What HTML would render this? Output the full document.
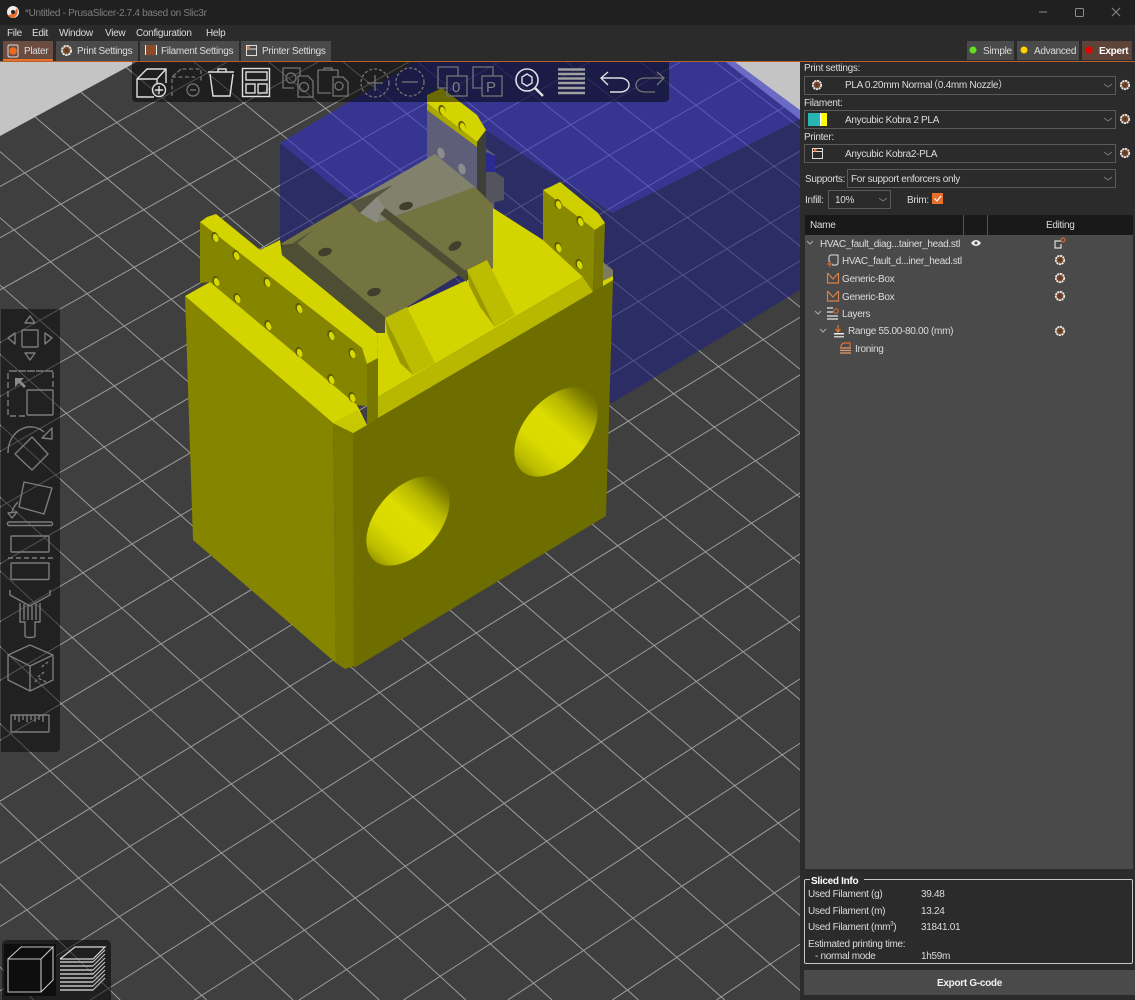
<!DOCTYPE html>
<html><head><meta charset="utf-8"><title>PrusaSlicer</title>
<style>
html,body{margin:0;padding:0;background:#2b2b2b;width:1135px;height:1000px;overflow:hidden}
#w{position:relative;width:1135px;height:1000px;overflow:hidden;font-family:"Liberation Sans","Noto Sans CJK SC",sans-serif;font-size:10px;letter-spacing:-.3px;color:#dcdcdc}
.b{position:absolute;box-sizing:border-box}
.t{position:absolute;white-space:nowrap;line-height:12px;height:12px}
svg{position:absolute;left:0;top:0}
sup{font-size:6px;line-height:0}
</style></head><body><div id="w">
<div class="b" style="left:0;top:0;width:1135px;height:25px;background:#202020"></div>
<div class="b" style="left:0;top:25px;width:1135px;height:37px;background:#2b2b2b"></div>
<div class="b" style="left:800px;top:62px;width:335px;height:938px;background:#2b2b2b"></div>
<div class="b" style="left:3px;top:41px;width:50px;height:20px;background:#6a4c40;border-bottom:2px solid #e8702a"></div>
<div class="b" style="left:56px;top:41px;width:82px;height:20px;background:#4a4a4a"></div>
<div class="b" style="left:140px;top:41px;width:99px;height:20px;background:#4a4a4a"></div>
<div class="b" style="left:241px;top:41px;width:90px;height:20px;background:#4a4a4a"></div>
<div class="b" style="left:967px;top:41px;width:47px;height:19px;background:#4a4a4a"></div>
<div class="b" style="left:1017px;top:41px;width:62px;height:19px;background:#4a4a4a"></div>
<div class="b" style="left:1082px;top:41px;width:50px;height:19px;background:#5e4339"></div>
<div class="b" style="left:0;top:61px;width:1135px;height:1px;background:#b5622f"></div>
<div class="b" style="left:804px;top:76px;width:312px;height:19px;border:1px solid #5a5a5a"></div>
<div class="b" style="left:804px;top:110px;width:312px;height:19px;border:1px solid #5a5a5a"></div>
<div class="b" style="left:804px;top:144px;width:312px;height:19px;border:1px solid #5a5a5a"></div>
<div class="b" style="left:847px;top:169px;width:269px;height:19px;border:1px solid #5a5a5a"></div>
<div class="b" style="left:828px;top:190px;width:63px;height:19px;border:1px solid #5a5a5a"></div>
<div class="b" style="left:805px;top:215px;width:328px;height:20px;background:#191919"></div>
<div class="b" style="left:805px;top:235px;width:328px;height:634px;background:#4a4a4a"></div>
<div class="b" style="left:963px;top:215px;width:1px;height:20px;background:#555"></div>
<div class="b" style="left:987px;top:215px;width:1px;height:20px;background:#555"></div>
<div class="b" style="left:804px;top:879px;width:329px;height:85px;border:1px solid #c8c8c8;border-radius:2px"></div>
<div class="b" style="left:810px;top:875px;width:54px;height:8px;background:#2b2b2b"></div>
<div class="b" style="left:804px;top:970px;width:331px;height:25px;background:#4a4a4a"></div>

<svg width="1135" height="1000" viewBox="0 0 1135 1000" fill="none">
<defs>
<clipPath id="vp"><rect x="0" y="62" width="800" height="938"/></clipPath>
<clipPath id="bed"><polygon points="483,-126 -400,353 -400,1000 1100,1000 1100,352"/></clipPath>
<linearGradient id="hg" gradientUnits="objectBoundingBox" x1="0" y1="0" x2="1" y2="0">
<stop offset="0" stop-color="#9a9a00"/><stop offset=".1" stop-color="#bcbc00"/><stop offset=".3" stop-color="#dada00"/><stop offset=".55" stop-color="#dcdc00"/><stop offset=".75" stop-color="#b8b800"/><stop offset=".92" stop-color="#808000"/><stop offset="1" stop-color="#6e6e00"/>
</linearGradient>
<symbol id="gear" viewBox="0 0 12 12" overflow="visible"><circle cx="6" cy="6" r="4.200" fill="#7a4a2c" stroke="#e8e8e8" stroke-width="1.800" stroke-dasharray="2.200 .6"/><circle cx="6" cy="6" r="1.600" fill="#5a3a28"/></symbol>
<symbol id="h" viewBox="0 0 10 14" overflow="visible"><ellipse cx="5" cy="7" rx="3.500" ry="5.200" transform="rotate(-18 5 7)" fill="#5e5e00"/><ellipse cx="5.700" cy="8" rx="2.600" ry="4.200" transform="rotate(-18 5.700 8)" fill="#d8d800"/></symbol>
</defs>

<g clip-path="url(#vp)">
<rect x="0" y="62" width="800" height="938" fill="#c4c4c4"/>
<polygon points="483,-126 -400,353 -400,1000 1100,1000 1100,352" fill="#3f3f3f"/>
<g clip-path="url(#bed)" stroke="#9c9c9c" stroke-width="1">
<path d="M-1485 1000L10800 -5730M-1379.500 1000L10800 -5730M-1274 1000L10800 -5730M-1169 1000L10800 -5730M-1064 1000L10800 -5730M-958.500 1000L10800 -5730M-853.500 1000L10800 -5730M-748.400 1000L10800 -5730M-643.400 1000L10800 -5730M-538.500 1000L10800 -5730M-433.500 1000L10800 -5730M-328.900 1000L10800 -5730M-224 1000L10800 -5730M-119.300 1000L10800 -5730M-14.700 1000L10800 -5730M90.100 1000L10800 -5730M194.400 1000L10800 -5730M299 1000L10800 -5730M403.500 1000L10800 -5730M507.800 1000L10800 -5730M612.300 1000L10800 -5730M716.400 1000L10800 -5730M820.700 1000L10800 -5730"/>
<path d="M-52.900 1000L-7165 -6030M33.700 1000L-7165 -6030M120.200 1000L-7165 -6030M206.500 1000L-7165 -6030M293.100 1000L-7165 -6030M379.300 1000L-7165 -6030M465.800 1000L-7165 -6030M552 1000L-7165 -6030M638.400 1000L-7165 -6030M724.700 1000L-7165 -6030M810.900 1000L-7165 -6030M897.100 1000L-7165 -6030M983.300 1000L-7165 -6030M1069.400 1000L-7165 -6030M1155.400 1000L-7165 -6030M1241.400 1000L-7165 -6030M1327.400 1000L-7165 -6030M1413.500 1000L-7165 -6030M1499.300 1000L-7165 -6030M1585.200 1000L-7165 -6030M1671 1000L-7165 -6030M1757 1000L-7165 -6030M1842.500 1000L-7165 -6030M1928.400 1000L-7165 -6030"/>
</g>
<!-- blue boxes -->
<polygon points="280,143 415,62 735,62 800,110 800,119 612,213 487,131 440,170 350,200" fill="rgba(48,48,200,.6)"/>
<polygon points="280,143 350,200 440,170 487,131 612,213 800,119 800,290 612,403 340,300 280,240" fill="rgba(33,33,128,.6)"/>

<!-- back plate -->
<polygon points="427,103 477,142 495,155 493,270 427,200" fill="#5e5e78"/>
<polygon points="427,95 442,88 477,115 486,130 477,142 427,103" fill="#d4d400"/>
<polygon points="427,103 477,142 477,147 427,110" fill="#a8a800"/>
<polygon points="477,142 486,130 486,205 477,200" fill="#3f3f3a"/>
<polygon points="486,152 495,156 495,172 486,172" fill="#2a2a90"/>
<polygon points="486,172 495,172 504,178 504,200 495,202 486,205" fill="#54545c"/>
<use href="#h" x="437" y="103" width="10" height="14"/>
<use href="#h" x="457" y="119" width="10" height="14"/>
<ellipse cx="441" cy="153" rx="3.500" ry="5.500" fill="#8c8c88" transform="rotate(-18 441 153)"/>
<ellipse cx="462" cy="169" rx="3.500" ry="5.500" fill="#8c8c88" transform="rotate(-18 462 169)"/>

<!-- right plate -->
<polygon points="543,190 595,230 593,292 583,277 543,240" fill="#8a8a00"/>
<polygon points="543,190 550,187 560,182 598,213 605,223 595,230" fill="#cfcf00"/>
<polygon points="595,230 605,223 603,286 593,292" fill="#777700"/>
<polygon points="603,262 613,270 613,283 603,287" fill="#7c7c60"/>
<polygon points="603,281 613,276 613,283 603,287" fill="#d4d400"/>
<use href="#h" x="553" y="197" width="10" height="14"/>
<use href="#h" x="575" y="214" width="10" height="14"/>
<use href="#h" x="553" y="240" width="10" height="14"/>
<use href="#h" x="574" y="257" width="10" height="14"/>

<!-- body faces -->
<polygon points="353,433 367,425 367,364 378,358 378,418 593,292 603,286 613,280 606,516 354,668" fill="#6e6e00"/>
<polygon points="185,296 333,423 336,663 193,540" fill="#858500"/>
<polygon points="333,423 353,433 354,666 345,669 336,663" fill="#7a7a00"/>
<!-- floor -->
<polygon points="378,358 377,333 385,318 493,268 493,208 543,240 583,277 378,397" fill="#d4d400"/>
<polygon points="378,397 583,277 593,292 378,418" fill="#b8b800"/>
<!-- plate -->
<polygon points="200,222 362,348 367,363 367,406 357,405 210,282 200,283" fill="#858500"/>
<polygon points="185,296 210,282 357,405 367,425 353,433 333,423" fill="#d4d400"/>
<polygon points="333,423 357,410 367,425 353,433" fill="#c8c800"/>
<polygon points="200,222 207,217 216,214 260,250 280,240 282,255 377,333 378,358 367,364 362,348" fill="#d4d400"/>
<polygon points="367,364 378,358 378,418 367,425" fill="#787800"/>
<g>
<use href="#h" x="210" y="230" width="10" height="14"/>
<use href="#h" x="231" y="248" width="10" height="14"/>
<use href="#h" x="211" y="274" width="10" height="14"/>
<use href="#h" x="232" y="291" width="10" height="14"/>
<use href="#h" x="262" y="275" width="10" height="14"/>
<use href="#h" x="263" y="318" width="10" height="14"/>
<use href="#h" x="294" y="301" width="10" height="14"/>
<use href="#h" x="294" y="345" width="10" height="14"/>
<use href="#h" x="326" y="328" width="10" height="14"/>
<use href="#h" x="326" y="372" width="10" height="14"/>
<use href="#h" x="347" y="346" width="10" height="14"/>
<use href="#h" x="347" y="390" width="10" height="14"/>
</g>
<!-- translucent -->
<polygon points="282,243 350,203 377,223 475,187 493,205 493,268 467,270 407,307 387,318 377,333 282,255" fill="#747440"/>
<polygon points="350,203 435,154 475,187 377,223" fill="#82826c"/>
<polygon points="282,245 297,243 385,317 385,333 377,333 282,255" fill="#4e4e34"/>
<polygon points="293,243 313,230 298,243" fill="#55553f"/>
<polygon points="385,208 467,272 467,282 380,214" fill="#4e4e34"/>
<polygon points="350,203 393,185 377,197 360,213" fill="#55553f"/>
<polygon points="360,213 377,197 385,208 380,214 377,223" fill="#8a8a80"/>
<g fill="#3f3f2c">
<ellipse cx="325" cy="252" rx="7" ry="4" transform="rotate(-15 325 252)"/>
<ellipse cx="374" cy="292" rx="7" ry="4" transform="rotate(-15 374 292)"/>
<ellipse cx="406" cy="206" rx="7" ry="4" transform="rotate(-15 406 206)"/>
<ellipse cx="455" cy="246" rx="7" ry="4" transform="rotate(-30 455 246)"/>
</g>
<!-- ribs -->
<polygon points="385,318 407,307 435,363 413,375 400,363" fill="#bcbc00"/>
<polygon points="385,318 387,333 400,363 413,375 396,340" fill="#9a9a00"/>
<polygon points="467,270 487,260 515,315 495,327 480,307" fill="#bcbc00"/>
<polygon points="467,270 469,285 480,307 495,327 478,292" fill="#9a9a00"/>
<!-- holes -->
<ellipse cx="408" cy="521" rx="52" ry="32" transform="rotate(-49.400 408 521)" fill="url(#hg)"/>
<ellipse cx="556" cy="432" rx="52" ry="32" transform="rotate(-49.400 556 432)" fill="url(#hg)"/>

<!-- top toolbar -->
<path d="M132 62H669V98a4 4 0 0 1-4 4H136a4 4 0 0 1-4-4Z" fill="rgba(0,0,0,.5)"/>
<!-- left toolbar -->
<path d="M1 309H60V748a4 4 0 0 1-4 4H1Z" fill="rgba(0,0,0,.47)"/>
<!-- bottom left -->
<path d="M2 1000V945a5 5 0 0 1 5-5H106a5 5 0 0 1 5 5V1000Z" fill="rgba(0,0,0,.5)"/>
<rect x="4" y="944" width="52" height="52" fill="#0e0e0e"/>
</g>

<!-- top icons -->
<g stroke="#e0e0e0" stroke-width="1.400" fill="none">
<path d="M154 97H137V79L147 69H166V83M137 79H157V84M157 79L166 69"/>
<circle cx="159" cy="90" r="6.500"/><path d="M155 90H163M159 86V94"/>
<path d="M208 72H234M218 72V69H226V72M210 74L213 96H230L233 74"/>
<rect x="242.500" y="68.500" width="27" height="28"/><rect x="246" y="72" width="21" height="8"/><rect x="246" y="84" width="9" height="9"/><rect x="258" y="84" width="9" height="9"/>
<circle cx="527" cy="80" r="11" stroke-width="1.600"/><path d="M527 74L532 77V83L527 86L522 83V77Z"/><path d="M535 88L543 96" stroke-width="2.400"/>
<path d="M608 72L601 78L608 85M601 78H620C632 78 632 92 620 92H610"/>
</g>
<g stroke="#747474" stroke-width="1.300" fill="none">
<path d="M172 96V77L181 69H201V82M172 77H195M181 69L172 77" stroke-dasharray="4 2.500"/>
<circle cx="193" cy="90" r="6"/><path d="M190 90H196"/>
<path d="M294 88H283V68H300V76"/><circle cx="291" cy="78" r="5"/><path d="M298 76H308L313 81V97H298Z"/><circle cx="304" cy="87" r="4.500"/>
<path d="M331 93H318V70H338V77M324 70V68H332V71"/><path d="M333 77H343L348 82V96H333Z"/><circle cx="339" cy="86" r="4"/>
<circle cx="375" cy="83" r="14" stroke-dasharray="3 2"/><path d="M367 83H383M375 75V91"/>
<circle cx="410" cy="82" r="14" stroke-dasharray="3 2"/><path d="M402 82H418"/>
<path d="M447 88H438V67H458V76"/><rect x="447" y="76" width="20" height="20"/>
<path d="M482 88H473V67H493V76"/><rect x="482" y="76" width="20" height="20"/>
<path d="M657 72L664 78L657 85M664 78H645C633 78 633 92 645 92H655"/>
</g>
<g stroke="#a0a0a0" stroke-width="2.600"><path d="M558 69.500H585M558 74H585M558 78.500H585M558 83H585M558 88H585M558 93H585"/></g>
<text x="452" y="92" font-family="Liberation Sans, sans-serif" font-size="15" fill="#808080" stroke="none">0</text>
<text x="486" y="92" font-family="Liberation Sans, sans-serif" font-size="15" fill="#808080" stroke="none">P</text>

<!-- left icons -->
<g stroke="#7c7c7c" stroke-width="1.400" fill="none" stroke-linejoin="round">
<rect x="22" y="330" width="16" height="17" rx="1"/>
<path d="M30 316L25 323H35ZM30 360L25 353H35ZM8 338L15 333V344ZM52 338L45 333V344Z"/>
<path d="M25 416H8V371H53V390M53 371H8" stroke-dasharray="6 3"/><rect x="27" y="390" width="26" height="25" rx="1"/>
<path d="M15 378H24L21 381L26 386L24 388L19 383L15 387Z" fill="#8a8a8a" stroke="none"/>
<path d="M8 453C8 430 30 420 44 432"/><path d="M42 438L52 428L52 439Z"/><path d="M32 437L48 454L32 470L15 454Z"/>
<path d="M24 482L52 488L44 514L19 507Z"/><path d="M18 502C15 505 13 508 12 512"/><path d="M8 513L17 512L12 518Z"/>
<rect x="7.500" y="522" width="45" height="3.500" rx="1.500"/>
<rect x="11" y="536" width="38" height="16" rx="1"/><path d="M8 558H53" stroke-dasharray="5 3"/><rect x="11" y="563" width="38" height="16.500" rx="1"/>
<path d="M10 590V595L30 606L50 595V590"/><path d="M20 603V622H25V636C25 638 35 638 35 636V622H40V603M24 604V620M28 606V620M32 606V620M36 604V620"/>
<path d="M8 655L30 645L53 655V680L30 691L8 680ZM8 655L30 666L53 655M30 666V691"/><path d="M48 662L40 668M44 672L38 677M35 682L38 678M46 682L38 678" stroke-dasharray="3 2"/>
<rect x="11" y="715" width="38" height="17" rx="1"/><path d="M15 715V720M19 715V722M23 715V720M27 715V722M31 715V720M35 715V722M39 715V720M43 715V722"/>
</g>

<!-- bottom left icons -->
<g stroke="#c4c4c4" stroke-width="1.100" fill="none"><path d="M8 959H41V992H8ZM8 959L21 947H53L41 959M53 947V980L41 992"/></g>
<g stroke="#d8d8d8" stroke-width="1.200" fill="none"><path d="M60 959L75 947H105L93 959H60"/></g>
<g stroke="#c0c0c0" stroke-width="1.600" fill="none"><path d="M60 962H93M60 966H93M60 970H93M60 974H93M60 978H93M60 982H93M60 986H93M60 990H93"/><path d="M93 962L105 950M93 966L105 954M93 970L105 958M93 974L105 962M93 978L105 966M93 982L105 970M93 986L105 974M93 990L105 978" stroke-width="1.200"/></g>

<!-- title logo -->
<circle cx="13" cy="12" r="6" fill="#eee"/><path d="M8 15C11 15 15 12 17 8C19 12 17 17 13 18C11 18 9 17 8 15Z" fill="#e8702a"/><circle cx="13" cy="12" r="2" fill="#222"/>
<!-- window buttons -->
<path d="M1039 12H1047" stroke="#8a8a8a"/><rect x="1075.500" y="8.500" width="8" height="8" rx="1" stroke="#8a8a8a"/><path d="M1112 8L1120 16M1120 8L1112 16" stroke="#8a8a8a"/>

<!-- tab icons -->
<rect x="8" y="45" width="10" height="12" rx="1.500" stroke="#ddd" fill="none"/><circle cx="13" cy="51" r="3.800" fill="#ec6a20"/>
<use href="#gear" x="60" y="44" width="13" height="13"/>
<rect x="145" y="45" width="11" height="10" fill="#8c4a26"/><path d="M145.500 45V55M156.500 45V55" stroke="#eee"/>
<rect x="246.500" y="45.500" width="10" height="10" stroke="#ddd" fill="none"/><path d="M247 49H256" stroke="#ddd"/><rect x="247" y="46" width="3" height="3" fill="#ec6a20"/>

<!-- mode dots -->
<circle cx="973" cy="50" r="3.500" fill="#60e020"/><circle cx="1024" cy="50" r="3.500" fill="#ffd000"/><circle cx="1089" cy="50" r="3.500" fill="#e80000"/>

<!-- combos icons -->
<use href="#gear" x="811" y="79" width="12" height="12"/>
<rect x="808" y="113" width="12" height="13" fill="#2ab5b5"/><rect x="820" y="113" width="7" height="13" fill="#ffff00"/><rect x="820" y="113" width="1" height="13" fill="#fff"/>
<rect x="812.500" y="148.500" width="10" height="10" stroke="#ddd" fill="none"/><path d="M813 151.500H822" stroke="#ddd"/><rect x="814" y="149" width="2.500" height="2.500" fill="#ec6a20"/>
<use href="#gear" x="1119" y="79" width="12" height="12"/><use href="#gear" x="1119" y="113" width="12" height="12"/><use href="#gear" x="1119" y="147" width="12" height="12"/>
<path d="M1104 84L1108 87L1112 84M1104 118L1108 121L1112 118M1104 152L1108 155L1112 152M1104 177L1108 180L1112 177M879 198L883 201L887 198" stroke="#777" fill="none"/>
<rect x="932" y="193" width="11" height="11" fill="#e8702a"/><path d="M934.500 198.500L937 201L941 196" stroke="#fff" stroke-width="1.200" fill="none"/>

<!-- tree icons -->
<path d="M807 241L810 244L813 241M815 311L818 314L821 311M820 329L823 332L826 329" stroke="#aaa" fill="none"/>
<path d="M971 243C974 239 978 239 981 243C978 247 974 247 971 243Z" fill="#eee"/><circle cx="976" cy="243" r="1.500" fill="#4a4a4a"/>
<path d="M1061 241H1055V248H1061V244" stroke="#ddd" fill="none" stroke-width="1.200"/><circle cx="1063" cy="240" r="2" stroke="#e8702a" fill="none"/>
<path d="M829 262V257C829 256 830 255 831 255H838V263C838 264 837 265 836 265H832" stroke="#ddd" fill="none"/><path d="M827 264H833M830 261V267" stroke="#e8702a"/>
<path d="M827.500 273V283H838.500V273M827.500 273L833 279L838.500 273" stroke="#d9804a" fill="none" stroke-width="1.200"/>
<path d="M827.500 291V301H838.500V291M827.500 291L833 297L838.500 291" stroke="#d9804a" fill="none" stroke-width="1.200"/>
<path d="M827 308H833M827 312H833M827 316H838M827 319H838" stroke="#e8e8e8" stroke-width="1.200"/><circle cx="836" cy="311" r="2.200" stroke="#e8702a" fill="none"/>
<path d="M838 325V331M835.500 329L838 332L840.500 329" stroke="#e8702a" stroke-width="1.300" fill="none"/><rect x="834" y="333" width="10" height="1.500" fill="#eee"/><rect x="834" y="336" width="10" height="1.500" fill="#ccc"/>
<path d="M841 347C841 344 843 343 845 343H850V347" stroke="#e8702a" fill="none" stroke-width="1.200"/><path d="M840 348H851M840 350.500H851M840 353H851" stroke="#e89a6a" stroke-width="1.300"/>
<use href="#gear" x="1054" y="254" width="12" height="12"/><use href="#gear" x="1054" y="272" width="12" height="12"/><use href="#gear" x="1054" y="290" width="12" height="12"/><use href="#gear" x="1054" y="325" width="12" height="12"/>
</svg>

<div class="t" style="left:25px;top:8px;color:#7e7e7e">*Untitled - PrusaSlicer-2.7.4 based on Slic3r</div>
<div class="t" style="left:7px;top:28px">File</div>
<div class="t" style="left:32px;top:28px">Edit</div>
<div class="t" style="left:59px;top:28px">Window</div>
<div class="t" style="left:105px;top:28px">View</div>
<div class="t" style="left:136px;top:28px">Configuration</div>
<div class="t" style="left:206px;top:28px">Help</div>
<div class="t" style="left:24px;top:46px">Plater</div>
<div class="t" style="left:77px;top:46px">Print Settings</div>
<div class="t" style="left:161px;top:46px">Filament Settings</div>
<div class="t" style="left:262px;top:46px">Printer Settings</div>
<div class="t" style="left:983px;top:46px">Simple</div>
<div class="t" style="left:1034px;top:46px">Advanced</div>
<div class="t" style="left:1099px;top:46px;color:#fff;font-weight:bold">Expert</div>
<div class="t" style="left:804px;top:63px">Print settings:</div>
<div class="t" style="left:845px;top:80px">PLA 0.20mm Normal<span style="margin-left:-4px">（</span>0.4mm Nozzle）</div>
<div class="t" style="left:804px;top:98px">Filament:</div>
<div class="t" style="left:845px;top:115px">Anycubic Kobra 2 PLA</div>
<div class="t" style="left:804px;top:132px">Printer:</div>
<div class="t" style="left:845px;top:149px">Anycubic Kobra2-PLA</div>
<div class="t" style="left:805px;top:174px">Supports:</div>
<div class="t" style="left:851px;top:174px">For support enforcers only</div>
<div class="t" style="left:805px;top:195px">Infill:</div>
<div class="t" style="left:835px;top:195px">10%</div>
<div class="t" style="left:907px;top:195px">Brim:</div>
<div class="t" style="left:810px;top:220px">Name</div>
<div class="t" style="left:1046px;top:220px">Editing</div>
<div class="t" style="left:820px;top:239px">HVAC_fault_diag...tainer_head.stl</div>
<div class="t" style="left:842px;top:256px">HVAC_fault_d...iner_head.stl</div>
<div class="t" style="left:842px;top:274px">Generic-Box</div>
<div class="t" style="left:842px;top:292px">Generic-Box</div>
<div class="t" style="left:842px;top:309px">Layers</div>
<div class="t" style="left:848px;top:326px">Range 55.00-80.00 (mm)</div>
<div class="t" style="left:855px;top:344px">Ironing</div>
<div class="t" style="left:811px;top:876px;color:#fff;font-weight:bold">Sliced Info</div>
<div class="t" style="left:808px;top:889px">Used Filament (g)</div>
<div class="t" style="left:921px;top:889px">39.48</div>
<div class="t" style="left:808px;top:906px">Used Filament (m)</div>
<div class="t" style="left:921px;top:906px">13.24</div>
<div class="t" style="left:808px;top:922px">Used Filament (mm<sup>3</sup>)</div>
<div class="t" style="left:921px;top:922px">31841.01</div>
<div class="t" style="left:808px;top:939px">Estimated printing time:</div>
<div class="t" style="left:815px;top:951px">- normal mode</div>
<div class="t" style="left:921px;top:951px">1h59m</div>
<div class="t" style="left:937px;top:978px;color:#f0f0f0;font-weight:bold">Export G-code</div>
</div></body></html>
